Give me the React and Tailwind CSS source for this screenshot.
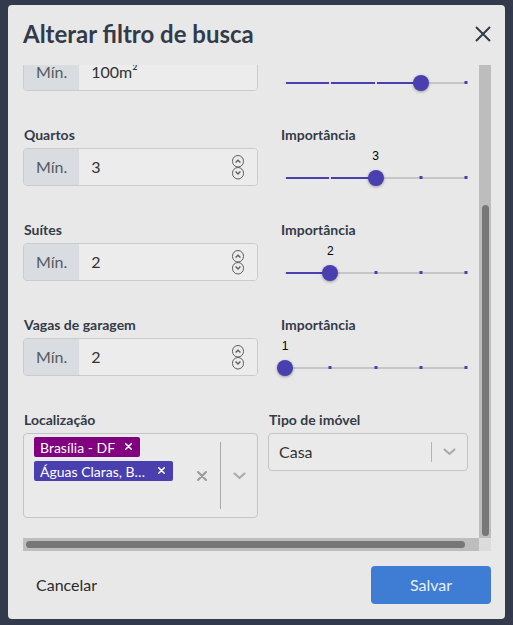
const INDIGO = "#4a3fae";

function Spinner() {
  return (
    <svg width="14" height="25" viewBox="0 0 14 25" fill="none" stroke="#5f5f5f" strokeWidth="1">
      <rect x="1.5" y="0.5" width="11" height="11.5" rx="5.5" />
      <path d="M4.6 7.6 L7 5.2 L9.4 7.6" strokeWidth="1.4" />
      <rect x="1.5" y="12.5" width="11" height="11.5" rx="5.5" />
      <path d="M4.6 16.6 L7 19 L9.4 16.6" strokeWidth="1.4" />
    </svg>
  );
}

function Chevron({ color = "#a8a8a8" }) {
  return (
    <svg width="13" height="8" viewBox="0 0 13 8" fill="none" stroke={color} strokeWidth="2" strokeLinecap="round">
      <path d="M1.5 1.5 L6.5 6 L11.5 1.5" />
    </svg>
  );
}

function Cross({ size = 10, color = "#9a9a9a", width = 2 }) {
  return (
    <svg width={size} height={size} viewBox="0 0 10 10" fill="none" stroke={color} strokeWidth={width} strokeLinecap="round">
      <path d="M1 1 L9 9 M9 1 L1 9" />
    </svg>
  );
}

function MinInput({ value, spinner }) {
  return (
    <div className="flex h-[38px] w-[235px] overflow-hidden rounded-[4px] border border-[#cbcbcb]">
      <div className="flex items-center bg-[#d9dce0] px-[12px] text-[16px] text-[#555a60]">Mín.</div>
      <div className="flex flex-1 items-center justify-between bg-[#ececec] pl-[12px] pr-[12px] text-[16px] text-[#333]">
        <span>{value}</span>
        {spinner && <Spinner />}
      </div>
    </div>
  );
}

function Slider({ value }) {
  const pct = ((value - 1) / 4) * 100;
  const ticks = [0, 25, 50, 75, 100];
  return (
    <div className="relative ml-[5px] h-[38px] w-[181px]">
      <span
        className="absolute top-[1px] -translate-x-1/2 font-['Liberation_Sans',sans-serif] text-[12px] leading-[14px] text-black"
        style={{ left: pct + "%" }}
      >
        {value}
      </span>
      <div className="absolute left-0 right-0 top-[29px] h-[2px] bg-[#c6c6c6]" />
      <div className="absolute left-0 top-[29px] h-[2px]" style={{ width: pct + "%", backgroundColor: INDIGO }} />
      {ticks.map(t =>
        t < pct ? (
          <div key={t} className="absolute top-[29px] h-[2px] w-[2px] -translate-x-1/2 bg-[#dedede]" style={{ left: t + "%" }} />
        ) : (
          <div key={t} className="absolute top-[28px] h-[3px] w-[3px] -translate-x-1/2 bg-[#4a3fae]" style={{ left: t + "%" }} />
        )
      )}
      <div
        className="absolute top-[22px] h-4 w-4 -translate-x-1/2 rounded-full bg-[#4a3fae] shadow-[0_1px_3px_rgba(0,0,0,0.35)]"
        style={{ left: pct + "%" }}
      />
    </div>
  );
}

function Label({ children }) {
  return <div className="h-5 pl-[1px] text-[14px] font-bold leading-5 text-[#343b49]">{children}</div>;
}

function FilterRow({ label, value, importance, spinner }) {
  return (
    <div className="flex gap-[22px]">
      <div className="flex w-[235px] flex-col gap-[3px]">
        <Label>{label}</Label>
        <MinInput value={value} spinner={spinner} />
      </div>
      <div className="flex w-[190px] flex-col gap-[3px]">
        <Label>Importância</Label>
        <Slider value={importance} />
      </div>
    </div>
  );
}

function Chip({ bg, children, textWidth }) {
  return (
    <div className="flex h-5 items-center rounded-[2px] pl-[6px] pr-[8px] text-[14px] text-white" style={{ backgroundColor: bg }}>
      <span className={textWidth ? "w-[108px] truncate" : ""}>{children}</span>
      <span className="mb-[1px] ml-[10px]">
        <Cross size={7} color="#ffffff" width={2.2} />
      </span>
    </div>
  );
}

export default function App() {
  const rows = [
    { label: "Área construída", value: "100m²", importance: 4, spinner: false },
    { label: "Quartos", value: "3", importance: 3, spinner: true },
    { label: "Suítes", value: "2", importance: 2, spinner: true },
    { label: "Vagas de garagem", value: "2", importance: 1, spinner: true },
  ];

  return (
    <div className="h-[625px] w-full bg-[#333a4b] px-[8px] pt-[5px] font-['Lato',sans-serif]">
      <div className="flex h-[614px] flex-col rounded-[4px] bg-[#e8e8e8]">
        {/* HEADER */}
        <div className="flex items-center justify-between pb-[15px] pl-[15px] pr-[14px] pt-[13px]">
          <h2 className="text-[24px] font-bold leading-[32px] text-[#333b4a]">Alterar filtro de busca</h2>
          <button>
            <svg width="16" height="16" viewBox="0 0 16 16" fill="none" stroke="#333b48" strokeWidth="2">
              <path d="M1 1 L15 15 M15 1 L1 15" />
            </svg>
          </button>
        </div>

        {/* BODY */}
        <div className="ml-[15px] mr-[14px] flex flex-col">
          <div className="flex h-[473px]">
            <div className="flex flex-1 flex-col justify-end overflow-hidden pb-[20px]">
              <div className="flex flex-col gap-[34px]">
                {rows.map(r => (
                  <FilterRow key={r.label} {...r} />
                ))}
                <div className="flex gap-[10px]">
                  <div className="flex w-[235px] flex-col gap-[3px]">
                    <Label>Localização</Label>
                    <div className="flex h-[85px] rounded-[4px] border border-[#c4c4c4] bg-[#eaeaea]">
                      <div className="flex flex-1 flex-col items-start gap-[4px] pl-[10px] pt-[3px]">
                        <Chip bg="#800080">Brasília - DF</Chip>
                        <Chip bg={INDIGO} textWidth>Águas Claras, Brasília - DF</Chip>
                      </div>
                      <div className="flex items-center">
                        <span className="mr-[13px]">
                          <Cross />
                        </span>
                        <div className="h-[67px] w-px bg-[#a9a9a9]" />
                        <div className="flex w-[36px] justify-center pt-[1px]">
                          <Chevron />
                        </div>
                      </div>
                    </div>
                  </div>
                  <div className="flex w-[200px] flex-col gap-[3px]">
                    <Label>Tipo de imóvel</Label>
                    <div className="flex h-[38px] items-center rounded-[4px] border border-[#c4c4c4] bg-[#eaeaea]">
                      <span className="flex-1 pl-[10px] text-[16px] text-[#333]">Casa</span>
                      <div className="h-[20px] w-px bg-[#b3b3b3]" />
                      <div className="flex w-[35px] justify-center">
                        <Chevron />
                      </div>
                    </div>
                  </div>
                </div>
              </div>
            </div>
            <div className="flex w-[12px] flex-col justify-end bg-[#bdbdbd] pb-[2px]">
              <div className="mx-auto h-[331px] w-[7px] rounded-full bg-[#777]" />
            </div>
          </div>
          <div className="flex h-[13px]">
            <div className="flex flex-1 items-center bg-[#bdbdbd] pl-[3px]">
              <div className="h-[7px] w-[439px] rounded-full bg-[#777]" />
            </div>
            <div className="w-[12px] bg-[#dcdcdc]" />
          </div>
        </div>

        {/* FOOTER */}
        <div className="flex items-center justify-between pl-[15px] pr-[14px] pt-[15px]">
          <button className="h-[38px] px-[13px] text-[16px] text-[#2b2b2b]">Cancelar</button>
          <button className="h-[38px] w-[120px] rounded-[4px] bg-[#3f7dd4] text-[16px] text-[#e8eef8]">Salvar</button>
        </div>
      </div>
    </div>
  );
}
